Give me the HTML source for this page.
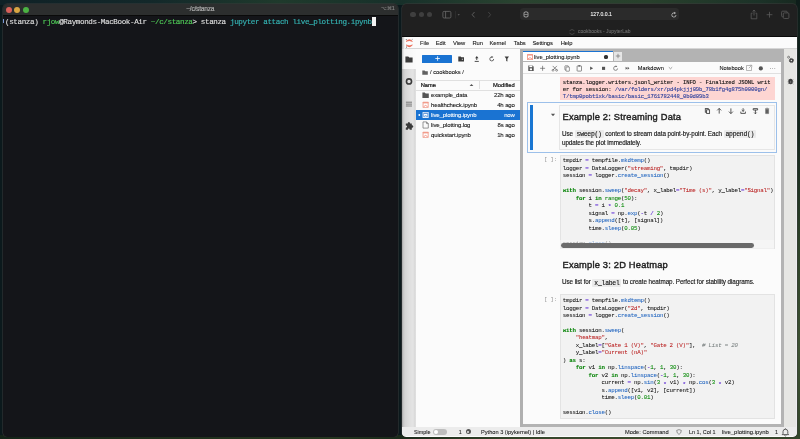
<!DOCTYPE html>
<html><head><meta charset="utf-8">
<style>
*{box-sizing:border-box;margin:0;padding:0}
html,body{width:800px;height:439px;overflow:hidden}
body{position:relative;background:#0c1d21;font-family:"Liberation Sans",sans-serif}
.a{position:absolute}
.wall{position:absolute;left:0;top:0;width:800px;height:439px;
 background:
  linear-gradient(90deg,#0f2126 0,#13282a 150px,#1f3a2c 280px,#17302a 400px,#2a4430 520px,#28402c 650px,#1c3228 760px,#17281f 800px) 0 0/800px 5px no-repeat,
  linear-gradient(90deg,#142418 0,#1e2e1c 150px,#26361f 330px,#1a2a1a 400px,#34442a 520px,#3c4c2e 650px,#34442a 800px) 0 435px/800px 4px no-repeat,
  #0b191c;}
.mono{font-family:"Liberation Mono",monospace}
.t{position:absolute;white-space:pre;line-height:1;-webkit-text-stroke:0.08px}
.cell{background:#f2f2f2;border:0.5px solid #e3e3e3}
.code{font-size:5.8px;letter-spacing:-0.24px;-webkit-text-stroke:0.05px;line-height:7.47px;white-space:pre;color:#111;overflow:hidden}
.code .k{color:#008000}.code b.k{font-weight:bold}
.code .s{color:#ba2121}.code .o{color:#6f42d8;font-weight:bold}.code .n{color:#008800}.code .p{color:#2266c0}.code .cm{color:#7f8585;font-style:italic}.ast{position:relative;top:1.3px}
.ic{font-family:"Liberation Mono",monospace;font-size:6.4px;letter-spacing:-0.24px;-webkit-text-stroke:0.12px;background:#ebebeb;padding:0.6px 1.9px;border-radius:1px;color:#111}
</style></head><body>
<div class="wall"></div>
<div class="a" style="left:796px;top:0;width:4px;height:439px;background:linear-gradient(180deg,#0e1d1a 0%,#14261c 30%,#2e4228 55%,#3e5232 80%,#33462a 100%)"></div>

<!-- TERMINAL -->
<div class="a" id="term" style="will-change:transform;left:3px;top:4px;width:395px;height:432.5px;border-radius:4.5px;background:#141519;overflow:hidden;box-shadow:0 0 0 0.5px #3a3a3a">
  <div class="a" style="left:0;top:0;width:395px;height:11.5px;background:#2c2e2e;border-bottom:0.6px solid #0a0a0a"></div>
  <div class="a" style="left:3px;top:3px;width:6px;height:6px;border-radius:50%;background:#d9605a"></div>
  <div class="a" style="left:11px;top:3px;width:6px;height:6px;border-radius:50%;background:#d9a643"></div>
  <div class="a" style="left:19.6px;top:3px;width:6px;height:6px;border-radius:50%;background:#4bb243"></div>
  <div class="t" style="left:183.2px;top:calc(5.6px - 0.55em);font-size:6.6px;letter-spacing:-0.22px;-webkit-text-stroke:0.2px;color:#ababab">~/c/stanza</div>
  <div class="t" style="left:378.4px;top:calc(5.2px - 0.55em);font-size:5.4px;letter-spacing:-0.35px;color:#8c8c8c">⌥⌘1</div>
  <div class="a" style="left:0px;top:15.3px;width:1.1px;height:4.2px;background:#7a9ad8"></div>
  <div class="t mono" style="left:2px;top:calc(19.1px - 0.5em);font-size:7.6px;letter-spacing:-0.392px;-webkit-text-stroke:0.15px;color:#dedede">(stanza) <span style="color:#4fc957">rjow</span>@Raymonds-MacBook-Air <span style="color:#4fc957">~/c/stanza</span>&gt; stanza <span style="color:#35b5b5">jupyter attach live_plotting.ipynb</span></div>
  <div class="a" style="left:368.8px;top:12.9px;width:4.2px;height:9.5px;background:#f2f2f2"></div>
</div>

<!-- BROWSER -->
<div class="a" id="brw" style="will-change:transform;left:402px;top:4px;width:394.8px;height:432.5px;border-radius:4.5px;background:#202020;overflow:hidden;box-shadow:0 0 0 0.5px #3a3a3a">
  <div class="a" style="left:0;top:31.8px;width:395px;height:1.2px;background:#0a0a0a"></div>
  <div class="a" style="left:8px;top:7.9px;width:5.5px;height:5.5px;border-radius:50%;background:#3f3f3f"></div>
  <div class="a" style="left:16.5px;top:7.9px;width:5.5px;height:5.5px;border-radius:50%;background:#3f3f3f"></div>
  <div class="a" style="left:24.9px;top:7.9px;width:5.5px;height:5.5px;border-radius:50%;background:#3f3f3f"></div>
  <svg class="a" style="left:38px;top:5px" width="60" height="12" viewBox="0 0 60 12">
    <rect x="2.9" y="2.4" width="8" height="6.6" rx="1.2" fill="none" stroke="#6a6a6a" stroke-width="0.8"/>
    <line x1="5.6" y1="2.4" x2="5.6" y2="9" stroke="#6a6a6a" stroke-width="0.8"/>
    <line x1="15.6" y1="2" x2="15.6" y2="9.5" stroke="#3a3a3a" stroke-width="0.5"/>
    <path d="M17.6 5.3 L19.8 5.3 L18.7 6.5 Z" fill="#6a6a6a"/>
    <path d="M34.5 3 L32.2 5.7 L34.5 8.4" fill="none" stroke="#6a6a6a" stroke-width="0.8"/>
    <path d="M48.3 3 L50.6 5.7 L48.3 8.4" fill="none" stroke="#4a4a4a" stroke-width="0.8"/>
  </svg>
  <div class="a" style="left:118.3px;top:4.4px;width:158.7px;height:11.9px;border-radius:3.5px;background:#2b2b2b"></div>
  <svg class="a" style="left:120px;top:6px" width="8" height="9" viewBox="0 0 8 9">
    <path d="M2 2.5 Q4 1 6 2.5 L6 6.5 Q4 7.8 2 6.5 Z" fill="none" stroke="#b8b8b8" stroke-width="0.8"/>
    <line x1="2.4" y1="4.5" x2="5.6" y2="4.5" stroke="#b8b8b8" stroke-width="0.6"/>
  </svg>
  <div class="t" style="left:188.5px;top:calc(11px - 0.55em);font-size:5.1px;-webkit-text-stroke:0.1px;color:#f4f4f4">127.0.0.1</div>
  <svg class="a" style="left:268px;top:6.5px" width="8" height="8" viewBox="0 0 8 8">
    <path d="M6 4 A2.1 2.1 0 1 1 4.6 2" fill="none" stroke="#bdbdbd" stroke-width="0.8"/>
    <path d="M4.2 0.8 L6 2 L4.2 3.2 Z" fill="#bdbdbd"/>
  </svg>
  <svg class="a" style="left:346px;top:4px" width="45" height="13" viewBox="0 0 45 13">
    <path d="M4.5 5.2 L3.2 5.2 L3.2 10.8 L8.8 10.8 L8.8 5.2 L7.5 5.2" fill="none" stroke="#5a5a5a" stroke-width="0.8"/>
    <line x1="6" y1="2" x2="6" y2="7.5" stroke="#5a5a5a" stroke-width="0.8"/>
    <path d="M4.6 3.4 L6 2 L7.4 3.4" fill="none" stroke="#5a5a5a" stroke-width="0.8"/>
    <line x1="21.5" y1="3.8" x2="21.5" y2="9.6" stroke="#5a5a5a" stroke-width="0.8"/>
    <line x1="18.6" y1="6.7" x2="24.4" y2="6.7" stroke="#5a5a5a" stroke-width="0.8"/>
    <rect x="33.6" y="3.2" width="5.6" height="5.6" rx="1" fill="none" stroke="#5a5a5a" stroke-width="0.8"/>
    <rect x="35.3" y="4.9" width="5.6" height="5.6" rx="1" fill="#202020" stroke="#5a5a5a" stroke-width="0.8"/>
  </svg>
  <svg class="a" style="left:166px;top:24px" width="8" height="8" viewBox="0 0 8 8">
    <path d="M1.6 3.2 A2.6 2.6 0 0 1 6.4 3.2" fill="none" stroke="#555" stroke-width="0.7"/>
    <path d="M6.4 4.8 A2.6 2.6 0 0 1 1.6 4.8" fill="none" stroke="#555" stroke-width="0.7"/>
  </svg>
  <div class="t" style="left:176px;top:calc(29.2px - 0.55em);font-size:4.95px;color:#6e6e6e">cookbooks - JupyterLab</div>
</div>

<!-- JUPYTERLAB -->
<div class="a" id="jl" style="will-change:transform;left:402px;top:37px;width:394.8px;height:399.5px;border-radius:0 0 4.5px 4.5px;background:#fbfbfb;overflow:hidden">
  <!-- menu bar -->
  <div class="a" style="left:0;top:11.2px;width:395px;height:0.6px;background:#d6d6d6"></div>
  <svg class="a" style="left:3px;top:1px" width="10" height="10" viewBox="0 0 10 10">
    <path d="M1.2 3.4 Q4.3 0 7.4 3.4 Q4.3 1.7 1.2 3.4 Z" fill="#e8543c" stroke="#e8543c" stroke-width="0.6"/>
    <path d="M1.2 7 Q4.3 10.4 7.4 7 Q4.3 8.7 1.2 7 Z" fill="#e8543c" stroke="#e8543c" stroke-width="0.6"/>
    <circle cx="1.3" cy="1.6" r="0.55" fill="#6b6b6b"/><circle cx="7.2" cy="1.2" r="0.5" fill="#8a8a8a"/><circle cx="1.5" cy="9" r="0.6" fill="#4a4a4a"/>
  </svg>
  <div class="a" style="left:0;top:0;width:3px;height:11.5px;background:linear-gradient(90deg,#a8a8a8,#f0f0f0 2.5px,rgba(251,251,251,0))"></div>
  <div class="t" style="left:18px;top:calc(6.9px - 0.55em);font-size:5.8px;letter-spacing:-0.08px;color:#1a1a1a;word-spacing:0">File</div>
  <div class="t" style="left:33.75px;top:calc(6.9px - 0.55em);font-size:5.8px;letter-spacing:-0.08px;color:#111">Edit</div>
  <div class="t" style="left:51px;top:calc(6.9px - 0.55em);font-size:5.8px;letter-spacing:-0.08px;color:#111">View</div>
  <div class="t" style="left:70.5px;top:calc(6.9px - 0.55em);font-size:5.8px;letter-spacing:-0.08px;color:#111">Run</div>
  <div class="t" style="left:87.5px;top:calc(6.9px - 0.55em);font-size:5.8px;letter-spacing:-0.08px;color:#111">Kernel</div>
  <div class="t" style="left:111.75px;top:calc(6.9px - 0.55em);font-size:5.8px;letter-spacing:-0.08px;color:#111">Tabs</div>
  <div class="t" style="left:130.5px;top:calc(6.9px - 0.55em);font-size:5.8px;letter-spacing:-0.08px;color:#111">Settings</div>
  <div class="t" style="left:158.75px;top:calc(6.9px - 0.55em);font-size:5.8px;letter-spacing:-0.08px;color:#111">Help</div>

  <!-- left sidebar -->
  <div class="a" style="left:0;top:11.8px;width:14px;height:378.5px;background:linear-gradient(90deg,#a0a0a0 0,#c4c4c4 1.2px,#d4d4d4 3px,#dedede 7px,#e4e4e4 11px,#d6d6d6 13.2px,#ececec 14px)"></div>
  <div class="a" style="left:0;top:11.8px;width:14px;height:20px;background:linear-gradient(90deg,#bcbcbc 0,#f4f4f4 2px,#fafafa 13px)"></div>
  <svg class="a" style="left:0;top:12px" width="14" height="85" viewBox="0 0 14 85">
    <path d="M3.4 7.6 L6.3 7.6 L7.2 8.6 L10.6 8.6 L10.6 13.4 L3.4 13.4 Z" fill="#3c3c3c"/>
    <circle cx="7" cy="32.4" r="2.55" fill="none" stroke="#3a3a3a" stroke-width="1.6"/>
    <line x1="3.9" y1="53.2" x2="10" y2="53.2" stroke="#555" stroke-width="0.75"/>
    <line x1="3.9" y1="55.1" x2="10" y2="55.1" stroke="#555" stroke-width="0.75"/>
    <line x1="3.9" y1="57" x2="10" y2="57" stroke="#555" stroke-width="0.75"/>
    <path d="M3.8 74.4 L5.7 74.4 Q5.7 72.9 6.9 72.9 Q8.1 72.9 8.1 74.4 L9.8 74.4 L9.8 76.3 Q11.3 76.3 11.3 77.5 Q11.3 78.7 9.8 78.7 L9.8 80.8 L7.7 80.8 Q7.7 79.5 6.8 79.5 Q5.9 79.5 5.9 80.8 L3.8 80.8 L3.8 78.7 Q5.1 78.7 5.1 77.6 Q5.1 76.5 3.8 76.5 Z" fill="#3a3a3a"/>
  </svg>

  <!-- file browser -->
  <div class="a" style="left:20.3px;top:17.6px;width:29.7px;height:8.2px;background:#1a73d2;border-radius:0.6px"></div>
  <svg class="a" style="left:31.5px;top:18.1px" width="7" height="7" viewBox="0 0 7 7"><path d="M3.6 1.2 V5.8 M1.3 3.5 H5.9" stroke="#fff" stroke-width="0.8"/></svg>
  <svg class="a" style="left:54px;top:17px" width="58" height="10" viewBox="0 0 58 10">
    <path d="M2.3 2.4 L4.6 2.4 L5.4 3.3 L8 3.3 L8 7.4 L2.3 7.4 Z" fill="#3a3a3a"/>
    <path d="M5.8 5.3 L7 5.3 M6.4 4.7 V5.9" stroke="#fff" stroke-width="0.45"/>
    <path d="M20.75 6 V2.6" fill="none" stroke="#3a3a3a" stroke-width="0.9"/>
    <path d="M19 4.2 L20.75 2.3 L22.5 4.2 Z" fill="#3a3a3a"/>
    <line x1="18.7" y1="7.4" x2="22.8" y2="7.4" stroke="#3a3a3a" stroke-width="0.9"/>
    <path d="M37.7 5 A1.95 1.95 0 1 1 36 3.05" fill="none" stroke="#3a3a3a" stroke-width="0.75"/>
    <path d="M35.5 2 L37.4 3 L35.7 4.1 Z" fill="#3a3a3a"/>
    <path d="M48.6 2.5 L53 2.5 L51.4 4.8 L51.4 7.6 L50.2 7.1 L50.2 4.8 Z" fill="#3a3a3a"/>
  </svg>
  <svg class="a" style="left:19px;top:32px" width="8" height="7" viewBox="0 0 8 7"><path d="M1.3 1.4 L3.6 1.4 L4.3 2.2 L6.8 2.2 L6.8 5.8 L1.3 5.8 Z" fill="#616161"/></svg>
  <div class="t" style="left:28px;top:calc(35.9px - 0.55em);font-size:5.75px;color:#111">/ cookbooks /</div>

  <div class="a" style="left:14px;top:42.6px;width:104px;height:0.5px;background:#e0e0e0"></div>
  <div class="a" style="left:14px;top:52.6px;width:104px;height:0.5px;background:#e0e0e0"></div>
  <div class="a" style="left:76.5px;top:43.5px;width:0.5px;height:8.5px;background:#e0e0e0"></div>
  <div class="t" style="left:18.7px;top:calc(48.9px - 0.55em);font-size:5.75px;-webkit-text-stroke:0.2px;color:#111">Name</div>
  <svg class="a" style="left:66.5px;top:45.6px" width="5" height="4" viewBox="0 0 5 4"><path d="M0.6 3.1 L2.5 0.9 L4.4 3.1 Z" fill="#555"/></svg>
  <div class="t" style="right:282px;top:calc(48.9px - 0.55em);font-size:5.8px;-webkit-text-stroke:0.2px;color:#111">Modified</div>

  <div class="a" style="left:14px;top:72.8px;width:104px;height:10.2px;background:#1a73d2"></div>
  <svg class="a" style="left:14px;top:53px" width="16" height="50" viewBox="0 0 16 50">
    <path d="M6.4 2.6 L8.8 2.6 L9.7 3.6 L12.8 3.6 L12.8 8 L6.4 8 Z" fill="#555"/>
    <rect x="6.6" y="11.8" width="6" height="6" rx="0.5" fill="#f19b8a"/><rect x="7.5" y="13.4" width="4.2" height="3.6" fill="#fff"/><path d="M7.6 16.700000000000003 Q9.6 14.100000000000001 11.6 16.700000000000003" fill="none" stroke="#ef6f5a" stroke-width="0.7"/>
    <circle cx="3.3" cy="25" r="0.9" fill="#fff"/>
    <rect x="6.6" y="21.9" width="6" height="6" rx="0.5" fill="#fff"/><rect x="7.3" y="22.6" width="4.6" height="4.6" fill="#5d93d8"/><rect x="7.9" y="23.9" width="3.4" height="2.8" fill="#fff"/><path d="M8 26.5 Q9.6 24.6 11.2 26.5" fill="none" stroke="#1a73d2" stroke-width="0.6"/>
    <path d="M7 31.9 L10.6 31.9 L12.3 33.6 L12.3 38.1 L7 38.1 Z M10.6 31.9 L10.6 33.6 L12.3 33.6" fill="none" stroke="#555" stroke-width="0.6"/>
    <rect x="6.6" y="41.8" width="6" height="6" rx="0.5" fill="#f19b8a"/><rect x="7.5" y="43.4" width="4.2" height="3.6" fill="#fff"/><path d="M7.6 46.699999999999996 Q9.6 44.099999999999994 11.6 46.699999999999996" fill="none" stroke="#ef6f5a" stroke-width="0.7"/>
  </svg>
  <div class="t" style="left:29px;top:calc(58.7px - 0.55em);font-size:6px;letter-spacing:-0.12px;color:#111">example_data</div>
  <div class="t" style="left:29px;top:calc(68.5px - 0.55em);font-size:6px;letter-spacing:-0.12px;color:#111">healthcheck.ipynb</div>
  <div class="t" style="left:29px;top:calc(78.6px - 0.55em);font-size:6px;letter-spacing:-0.12px;color:#fff">live_plotting.ipynb</div>
  <div class="t" style="left:29px;top:calc(88.7px - 0.55em);font-size:6px;letter-spacing:-0.12px;color:#111">live_plotting.log</div>
  <div class="t" style="left:29px;top:calc(98.7px - 0.55em);font-size:6px;letter-spacing:-0.12px;color:#111">quickstart.ipynb</div>
  <div class="t" style="right:282px;top:calc(58.7px - 0.55em);font-size:6px;letter-spacing:-0.12px;color:#111">22h ago</div>
  <div class="t" style="right:282px;top:calc(68.5px - 0.55em);font-size:6px;letter-spacing:-0.12px;color:#111">4h ago</div>
  <div class="t" style="right:282px;top:calc(78.6px - 0.55em);font-size:6px;letter-spacing:-0.12px;color:#fff">now</div>
  <div class="t" style="right:282px;top:calc(88.7px - 0.55em);font-size:6px;letter-spacing:-0.12px;color:#111">8s ago</div>
  <div class="t" style="right:282px;top:calc(98.7px - 0.55em);font-size:6px;letter-spacing:-0.12px;color:#111">1h ago</div>

  <!-- dock area -->
  <div class="a" style="left:118px;top:11.8px;width:264.8px;height:378.3px;background:#b3b3b3"></div>
  <div class="a" style="left:118px;top:11.8px;width:2.6px;height:378.3px;background:#b0b0b0"></div>
  <!-- tab -->
  <div class="a" style="left:121px;top:13.6px;width:89.5px;height:10.6px;background:#fff;border-top:1.1px solid #1a73d2"></div>
  <svg class="a" style="left:124.5px;top:16.6px" width="7" height="7" viewBox="0 0 7 7"><rect x="0" y="0" width="6" height="6" rx="0.5" fill="#f19b8a"/><rect x="0.9" y="1.6" width="4.2" height="3.6" fill="#fff"/><path d="M1 4.9 Q3 2.3 5 4.9" fill="none" stroke="#ef6f5a" stroke-width="0.7"/></svg>
  <div class="t" style="left:132px;top:calc(20.8px - 0.55em);font-size:5.75px;color:#111">live_plotting.ipynb</div>
  <div class="a" style="left:202.4px;top:18.4px;width:3.2px;height:3.2px;border-radius:50%;background:#333"></div>
  <div class="a" style="left:211.5px;top:14.6px;width:8px;height:9.6px;background:#e6e6e6"></div>
  <svg class="a" style="left:212.5px;top:16px" width="6" height="6" viewBox="0 0 6 6"><path d="M3 0.8 V5.2 M0.8 3 H5.2" stroke="#616161" stroke-width="0.6"/></svg>
  <!-- notebook panel -->
  <div class="a" style="left:121px;top:24.5px;width:257.6px;height:362.9px;background:#fbfbfb"></div>
  <div class="a" style="left:121px;top:36.3px;width:257.6px;height:0.5px;background:#e0e0e0"></div>

  <!-- notebook toolbar -->
  <svg class="a" style="left:121px;top:25px" width="160" height="12" viewBox="0 0 160 12">
    <g fill="#555" stroke="#555">
      <path d="M5.3 3.6 H9.5 L10.7 4.8 V9 H5.3 Z" stroke="none"/>
      <rect x="6.3" y="3.6" width="3" height="1.6" fill="#fff" stroke="none"/>
      <rect x="6.8" y="6.4" width="2.2" height="1.8" fill="#fff" stroke="none"/>
      <path d="M19.6 3.8 V8.8 M17.1 6.3 H22.1" fill="none" stroke-width="0.65"/>
      <path d="M29.7 3.9 L33.9 8.3 M33.9 3.9 L29.7 8.3" fill="none" stroke-width="0.65"/>
      <circle cx="30" cy="8.3" r="0.95" fill="none" stroke-width="0.55"/><circle cx="33.6" cy="8.3" r="0.95" fill="none" stroke-width="0.55"/>
      <rect x="41.9" y="3.8" width="3.4" height="4.2" rx="0.4" fill="none" stroke-width="0.6"/>
      <rect x="43" y="5" width="3.4" height="4.2" rx="0.4" fill="#fff" stroke-width="0.6"/>
      <rect x="54.1" y="3.9" width="4.4" height="5.2" rx="0.5" fill="none" stroke-width="0.65"/>
      <rect x="55.4" y="3.3" width="1.8" height="1.2" stroke="none"/>
      <path d="M67.1 4.5 L70.1 6.3 L67.1 8.1 Z" stroke="none"/>
      <rect x="79" y="4.8" width="3.1" height="3.1" stroke="none"/>
      <path d="M94.6 6.4 A2 2 0 1 1 93 4.4" fill="none" stroke-width="0.65"/>
      <path d="M92.6 3.4 L94.3 4.3 L92.8 5.3 Z" stroke="none"/>
      <path d="M102.6 4.8 L104.4 6.3 L102.6 7.8 Z M104.6 4.8 L106.4 6.3 L104.6 7.8 Z" stroke="none"/>
    </g>
  </svg>
  <div class="t" style="left:115.5px;top:calc(32.6px - 0.55em);font-size:5.65px;color:#111"></div>
  <div class="t" style="left:235.8px;top:calc(32.6px - 0.55em);font-size:5.65px;color:#111">Markdown</div>
  <svg class="a" style="left:266px;top:29px" width="5" height="4" viewBox="0 0 5 4"><path d="M0.8 1.2 L2.5 2.8 L4.2 1.2" fill="none" stroke="#616161" stroke-width="0.6"/></svg>
  <div class="t" style="left:317.5px;top:calc(32.6px - 0.55em);font-size:5.67px;color:#111">Notebook</div>
  <svg class="a" style="left:343px;top:27px" width="34" height="8" viewBox="0 0 34 8">
    <path d="M5.5 1.5 H1.5 V6.5 H6.5 V3" fill="none" stroke="#777" stroke-width="0.5"/>
    <path d="M3.8 4.2 L6.6 1.4 M4.8 1.2 H6.8 V3.2" fill="none" stroke="#777" stroke-width="0.5"/>
    <circle cx="15.8" cy="4.4" r="2.1" fill="#555"/>
    <circle cx="25.6" cy="4.4" r="0.45" fill="#555"/><circle cx="27.7" cy="4.4" r="0.45" fill="#555"/><circle cx="29.8" cy="4.4" r="0.45" fill="#555"/>
  </svg>

  <!-- stderr output -->
  <div class="a" style="left:157.75px;top:40.25px;width:214.85px;height:22.5px;background:#fdd5d2"></div>
  <div class="a mono" style="left:160.75px;top:42.2px;font-size:5.6px;letter-spacing:-0.11px;-webkit-text-stroke:0.12px;line-height:6.98px;white-space:pre;color:#151515">stanza.logger.writers.jsonl_writer - INFO - Finalized JSONL writ
er for session: <span style="color:#33449e">/var/folders/xr/pd4pkjjj09b_78b1fg4g875h0000gn/</span>
<span style="color:#33449e">T/tmp0pobt1xk/basic/basic_1761782448_0b0d09b3</span></div>

  <!-- selected markdown cell -->
  <div class="a" style="left:125.35px;top:64.8px;width:250px;height:51.2px;border:0.7px solid #9cc0ea"></div>
  <div class="a" style="left:127.6px;top:67.6px;width:3.5px;height:45.5px;background:#1976d2"></div>
  <svg class="a" style="left:148px;top:76px" width="6" height="4" viewBox="0 0 6 4"><path d="M0.9 0.8 L5.1 0.8 L3 3.2 Z" fill="#555"/></svg>
  <div class="a" style="left:157.4px;top:67.6px;width:215.2px;height:45.4px;background:#f9f9f9;border:0.5px solid #e6e6e6"></div>
  <div class="t" style="left:160.5px;top:75.5px;font-size:9.3px;letter-spacing:0.2px;-webkit-text-stroke:0.42px;color:#1f1f1f">Example 2: Streaming Data</div>
  <div class="a" style="left:160px;top:92.6px;font-size:6.3px;letter-spacing:-0.08px;-webkit-text-stroke:0.14px;line-height:8.55px;white-space:pre;color:#151515">Use <span class="ic">sweep()</span> context to stream data point-by-point. Each <span class="ic">append()</span>
updates the plot immediately.</div>
  <svg class="a" style="left:300px;top:70px" width="72" height="8" viewBox="0 0 72 8">
    <g fill="none" stroke="#3d3d3d" stroke-width="0.85">
      <rect x="3.3" y="1.6" width="3" height="3.6"/><rect x="4.6" y="2.8" width="3" height="3.6" fill="#f8f8f8"/>
      <path d="M17.2 6.6 V1.4 M15.2 3.4 L17.2 1.4 L19.2 3.4"/>
      <path d="M28.9 1.4 V6.6 M26.9 4.6 L28.9 6.6 L30.9 4.6"/>
      <path d="M41.1 1.2 V4.4 M39.7 3 L41.1 4.4 L42.5 3 M38.8 4.6 V6.4 H43.4 V4.6"/>
      <path d="M51.2 1.6 H55.6 V3 H51.2 Z M53.4 3 V6.8 M52.2 5.6 L53.4 6.8 L54.6 5.6"/>
    </g>
    <path d="M63.6 2.2 H66.6 V6.6 H63.6 Z M63 1.6 H67.2 M64.4 1.1 H65.8" fill="#616161" stroke="#616161" stroke-width="0.5"/>
  </svg>

  <!-- code cell 1 -->
  <div class="t mono" style="left:142px;top:calc(123.85px - 0.5em);font-size:5.4px;color:#9e9e9e">[ ]:</div>
  <div class="a cell" style="left:157.5px;top:118.25px;width:215px;height:93.5px"></div>
  <div class="a mono code" style="left:160.7px;top:120.35px;width:211px;height:90px">tmpdir <span class="o">=</span> tempfile.<span class="p">mkdtemp</span>()
logger <span class="o">=</span> DataLogger(<span class="s">&quot;streaming&quot;</span>, tmpdir)
session <span class="o">=</span> logger.<span class="p">create_session</span>()

<b class="k">with</b> session.<span class="p">sweep</span>(<span class="s">&quot;decay&quot;</span>, x_label<span class="o">=</span><span class="s">&quot;Time (s)&quot;</span>, y_label<span class="o">=</span><span class="s">&quot;Signal&quot;</span>) <b class="k">as</b> s:
    <b class="k">for</b> i <b class="k">in</b> <span class="k">range</span>(<span class="n">50</span>):
        t <span class="o">=</span> i <span class="o ast">*</span> <span class="n">0.1</span>
        signal <span class="o">=</span> np.<span class="p">exp</span>(<span class="o">-</span>t <span class="o">/</span> <span class="n">2</span>)
        s.<span class="p">append</span>([t], [signal])
        time.<span class="p">sleep</span>(<span class="n">0.05</span>)

session.<span class="p">close</span>()</div>
  <div class="a" style="left:158px;top:202.6px;width:214px;height:9px;background:rgba(246,246,246,0.6)"></div>
  <div class="a" style="left:159px;top:205.9px;width:193px;height:4.85px;border-radius:2.4px;background:#6b6b6b"></div>

  <!-- markdown 2 -->
  <div class="t" style="left:160.5px;top:224.4px;font-size:9.3px;letter-spacing:0.2px;-webkit-text-stroke:0.42px;color:#1f1f1f">Example 3: 2D Heatmap</div>
  <div class="a" style="left:160px;top:241.4px;font-size:6.3px;letter-spacing:-0.08px;-webkit-text-stroke:0.14px;line-height:8.55px;white-space:pre;color:#151515">Use list for <span class="ic">x_label</span> to create heatmap. Perfect for stability diagrams.</div>

  <!-- code cell 2 -->
  <div class="t mono" style="left:142px;top:calc(263.2px - 0.5em);font-size:5.4px;color:#9e9e9e">[ ]:</div>
  <div class="a cell" style="left:157.5px;top:257.1px;width:215px;height:124.8px"></div>
  <div class="a mono code" style="left:160.7px;top:260.05px;width:211px;height:121px">tmpdir <span class="o">=</span> tempfile.<span class="p">mkdtemp</span>()
logger <span class="o">=</span> DataLogger(<span class="s">&quot;2d&quot;</span>, tmpdir)
session <span class="o">=</span> logger.<span class="p">create_session</span>()

<b class="k">with</b> session.<span class="p">sweep</span>(
    <span class="s">&quot;heatmap&quot;</span>,
    x_label<span class="o">=</span>[<span class="s">&quot;Gate 1 (V)&quot;</span>, <span class="s">&quot;Gate 2 (V)&quot;</span>],  <i class="cm"># List = 20</i>
    y_label<span class="o">=</span><span class="s">&quot;Current (nA)&quot;</span>
) <b class="k">as</b> s:
    <b class="k">for</b> v1 <b class="k">in</b> np.<span class="p">linspace</span>(<span class="o">-</span><span class="n">1</span>, <span class="n">1</span>, <span class="n">30</span>):
        <b class="k">for</b> v2 <b class="k">in</b> np.<span class="p">linspace</span>(<span class="o">-</span><span class="n">1</span>, <span class="n">1</span>, <span class="n">30</span>):
            current <span class="o">=</span> np.<span class="p">sin</span>(<span class="n">3</span> <span class="o ast">*</span> v1) <span class="o ast">*</span> np.<span class="p">cos</span>(<span class="n">3</span> <span class="o ast">*</span> v2)
            s.<span class="p">append</span>([v1, v2], [current])
            time.<span class="p">sleep</span>(<span class="n">0.01</span>)

session.<span class="p">close</span>()</div>
  <!-- right sidebar -->
  <div class="a" style="left:382px;top:11.8px;width:13px;height:378.3px;background:linear-gradient(90deg,#e6e6e3 0,#e6e6e3 11.5px,#ededf0 12px)"></div>
  <svg class="a" style="left:382px;top:17px" width="13" height="35" viewBox="0 0 13 35">
    <circle cx="4.6" cy="3.2" r="1" fill="none" stroke="#444" stroke-width="0.6"/>
    <circle cx="7.4" cy="6.5" r="2.1" fill="#444" stroke="#444" stroke-width="0.9" stroke-dasharray="0.9 0.6"/>
    <circle cx="7.4" cy="6.5" r="0.75" fill="#e6e6e3"/>
    <ellipse cx="6.6" cy="27.5" rx="2.2" ry="2.7" fill="#3c3c3c"/>
    <path d="M3.9 25.6 L4.7 26.2 M9.3 25.6 L8.5 26.2 M3.7 27.8 H4.3 M9.5 27.8 H8.9 M3.9 30 L4.7 29.4 M9.3 30 L8.5 29.4" stroke="#3c3c3c" stroke-width="0.6"/>
    <ellipse cx="6.6" cy="28" rx="0.7" ry="1.2" fill="#6a6a6a"/>
  </svg>

  <!-- status bar -->
  <div class="a" style="left:0;top:389.8px;width:395px;height:9.7px;background:#ececec"></div>
  <div class="t" style="left:12px;top:calc(395.8px - 0.55em);font-size:5.4px;color:#1a1a1a">Simple</div>
  <div class="a" style="left:31px;top:392px;width:14px;height:5.5px;border-radius:3px;background:#bdbdbd"></div>
  <div class="a" style="left:31.6px;top:392.5px;width:4.5px;height:4.5px;border-radius:50%;background:#fff"></div>
  <div class="t" style="left:56.8px;top:calc(395.8px - 0.55em);font-size:5.4px;color:#1a1a1a">1</div>
  <div class="a" style="left:63.6px;top:392.3px;width:5.2px;height:5.2px;border-radius:50%;background:#555"></div>
  <div class="a" style="left:65px;top:393.7px;width:2.4px;height:2.4px;border-radius:50%;background:#eee"></div>
  <div class="t" style="left:79px;top:calc(395.8px - 0.55em);font-size:5.65px;color:#1a1a1a">Python 3 (ipykernel) | Idle</div>
  <div class="t" style="left:223px;top:calc(395.8px - 0.55em);font-size:5.7px;color:#1a1a1a">Mode: Command</div>
  <svg class="a" style="left:274px;top:392px" width="6" height="6" viewBox="0 0 6 6"><path d="M3 0.6 L5.3 1.4 Q5.3 4.4 3 5.4 Q0.7 4.4 0.7 1.4 Z" fill="none" stroke="#555" stroke-width="0.6"/></svg>
  <div class="t" style="left:287px;top:calc(395.8px - 0.55em);font-size:5.48px;color:#1a1a1a">Ln 1, Col 1</div>
  <div class="t" style="left:320px;top:calc(395.8px - 0.55em);font-size:5.9px;color:#1a1a1a">live_plotting.ipynb</div>
  <div class="t" style="left:373px;top:calc(395.8px - 0.55em);font-size:5.4px;color:#1a1a1a">1</div>
  <svg class="a" style="left:379px;top:390.8px" width="9" height="9" viewBox="0 0 9 9"><path d="M1.2 6.6 L2 5.6 L2 3.6 Q2 1.3 4.4 1.2 Q6.8 1.3 6.8 3.6 L6.8 5.6 L7.6 6.6 Z" fill="none" stroke="#333" stroke-width="0.75" stroke-linejoin="round"/><path d="M3.4 7.4 Q4.4 8.6 5.4 7.4" fill="none" stroke="#333" stroke-width="0.7"/><line x1="4.4" y1="0.4" x2="4.4" y2="1.2" stroke="#333" stroke-width="0.7"/></svg>
</div>

</body></html>
